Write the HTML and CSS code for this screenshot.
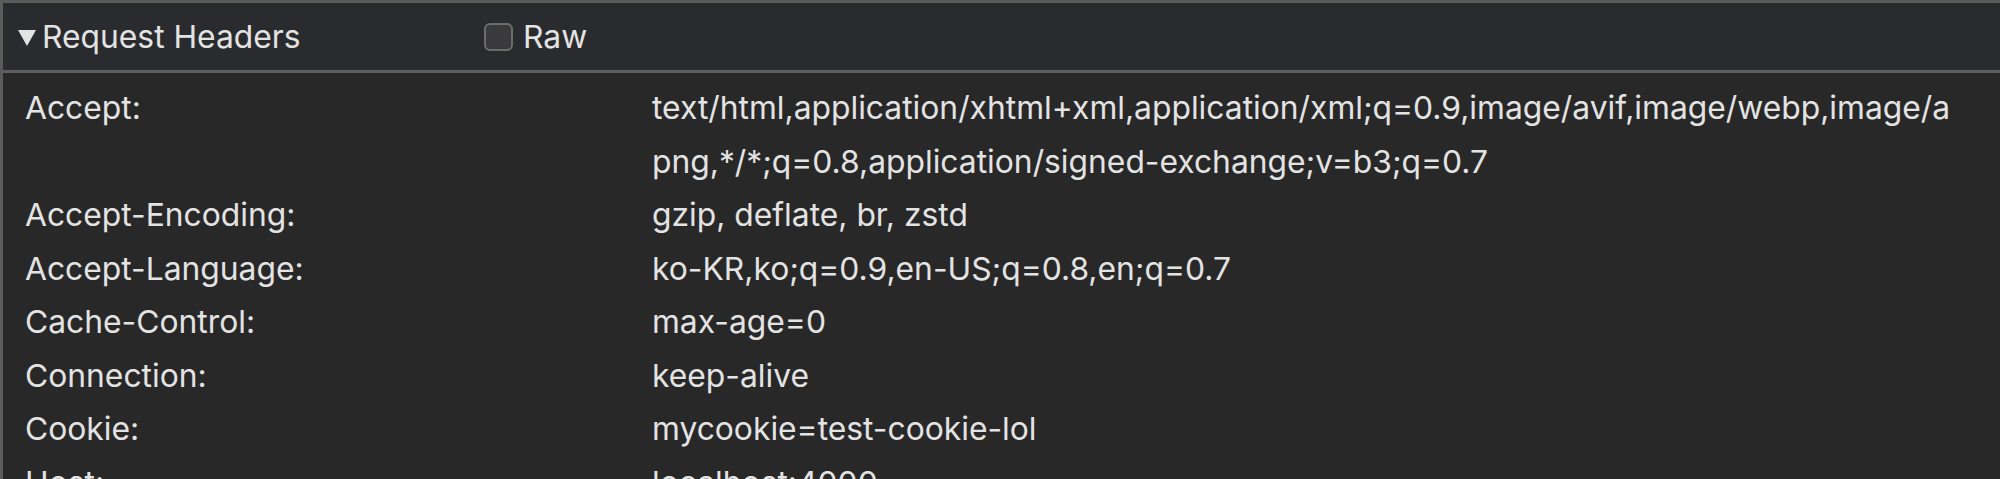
FILE: index.html
```html
<!DOCTYPE html>
<html>
<head>
<meta charset="utf-8">
<link rel="stylesheet" href="styles.css">
</head>
<body>
<section class="panel">
  <header class="panel-header">
    <div class="disclosure">
      <span class="triangle"></span>
      <span class="title">Request Headers</span>
    </div>
    <label class="raw">
      <span class="checkbox"></span>
      <span class="raw-label">Raw</span>
    </label>
  </header>
  <div class="headers">
    <div class="key">Accept:</div>
    <div class="value">text/html,application/xhtml+xml,application/xml;q=0.9,image/avif,image/webp,image/apng,*/*;q=0.8,application/signed-exchange;v=b3;q=0.7</div>
    <div class="key">Accept-Encoding:</div>
    <div class="value">gzip, deflate, br, zstd</div>
    <div class="key">Accept-Language:</div>
    <div class="value">ko-KR,ko;q=0.9,en-US;q=0.8,en;q=0.7</div>
    <div class="key">Cache-Control:</div>
    <div class="value">max-age=0</div>
    <div class="key">Connection:</div>
    <div class="value">keep-alive</div>
    <div class="key">Cookie:</div>
    <div class="value">mycookie=test-cookie-lol</div>
    <div class="key">Host:</div>
    <div class="value">localhost:4000</div>
  </div>
</section>
</body>
</html>
```
FILE: styles.css
```css
html, body {
  margin: 0;
  padding: 0;
  background: #282828;
  height: 100%;
  overflow: hidden;
}
body {
  font-family: Inter, "Noto Sans", sans-serif;
  font-size: 31.8px;
  color: #e3e3e3;
}
.panel {
  border-top: 3px solid #5b5b5b;
  border-left: 3px solid #5b5b5b;
  min-height: 100%;
  box-sizing: border-box;
}
.panel-header {
  height: 70px;
  background: #2a2b2e;
  border-bottom: 3px solid #5f5f5f;
  display: flex;
  align-items: center;
  box-sizing: border-box;
}
.disclosure {
  display: flex;
  align-items: center;
  width: 466px;
  padding-left: 15px;
}
.triangle {
  width: 0;
  height: 0;
  border-left: 9px solid transparent;
  border-right: 9px solid transparent;
  border-top: 16px solid #e3e3e3;
  margin-right: 6px;
  margin-top: 2px;
}
.raw {
  display: flex;
  align-items: center;
}
.checkbox {
  width: 25px;
  height: 24px;
  border: 2px solid #6c6c6c;
  border-radius: 6px;
  background: #3a3a3c;
  margin-right: 10px;
}
.headers {
  display: grid;
  grid-template-columns: 627px 1306px;
  padding: 8px 0 0 22px;
  line-height: 53.5px;
}
.value {
  word-break: break-all;
}
```
